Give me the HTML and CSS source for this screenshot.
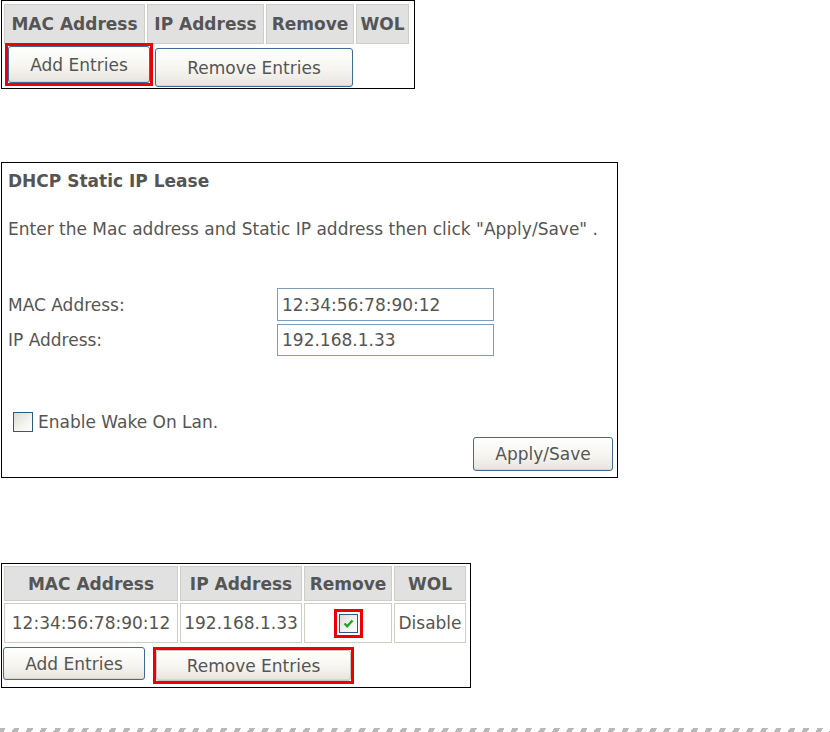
FILE: index.html
```html
<!DOCTYPE html>
<html lang="en">

<head>
    <meta charset="UTF-8">
    <meta name="viewport" content="width=device-width, initial-scale=1.0">
    <title>DHCP Static IP Lease</title>
    <link rel="stylesheet" href="styles.css">
</head>

<body>
    <div class="page">

        <!-- step 1: empty lease list -->
        <div class="panel panel-list-empty">
            <table class="lease-table lease-table-small">
                <tr>
                    <th class="col-mac">MAC Address</th>
                    <th class="col-ip">IP Address</th>
                    <th class="col-remove">Remove</th>
                    <th class="col-wol">WOL</th>
                </tr>
            </table>
            <div class="button-row">
                <span class="marker marker-add">
                    <button class="btn btn-add">Add Entries</button>
                </span>
                <button class="btn btn-remove">Remove Entries</button>
            </div>
        </div>

        <!-- step 2: add form -->
        <div class="panel panel-form">
            <div class="lease-title">DHCP Static IP Lease</div>
            <div class="lease-intro">Enter the Mac address and Static IP address then click "Apply/Save" .</div>

            <div class="lease-form">
                <label for="mac">MAC Address:</label>
                <input type="text" id="mac" class="field field-mac" value="12:34:56:78:90:12">
                <label for="ip">IP Address:</label>
                <input type="text" id="ip" class="field field-ip" value="192.168.1.33">
            </div>

            <div class="wol-row">
                <span class="checkbox"></span>
                <span class="wol-label">Enable Wake On Lan.</span>
            </div>

            <div class="apply-row">
                <button class="btn btn-apply">Apply/Save</button>
            </div>
        </div>

        <!-- step 3: list with one entry -->
        <div class="panel panel-list">
            <table class="lease-table lease-table-full">
                <tr>
                    <th class="col-mac">MAC Address</th>
                    <th class="col-ip">IP Address</th>
                    <th class="col-remove">Remove</th>
                    <th class="col-wol">WOL</th>
                </tr>
                <tr class="data-row">
                    <td>12:34:56:78:90:12</td>
                    <td>192.168.1.33</td>
                    <td>
                        <span class="marker marker-check">
                            <span class="checkbox checked">
                                <svg width="11" height="9" viewBox="0 0 11 9">
                                    <path d="M1.5 4.5 L4.2 7.2 L9.5 1.5" fill="none" stroke="#22a32a" stroke-width="2.4" />
                                </svg>
                            </span>
                        </span>
                    </td>
                    <td>Disable</td>
                </tr>
            </table>
            <div class="button-row">
                <button class="btn btn-add">Add Entries</button>
                <span class="marker marker-remove">
                    <button class="btn btn-remove pressed">Remove Entries</button>
                </span>
            </div>
        </div>

        <div class="divider"></div>
    </div>
</body>

</html>
```

FILE: styles.css
```css
* {
    box-sizing: border-box;
}

body {
    margin: 0;
    background-color: #fff;
    font-family: "DejaVu Sans", Verdana, sans-serif;
    font-size: 17px;
    color: #555;
}

.page {
    padding-left: 1px;
}

.panel {
    border: 1px solid #000;
}

/* panels */

.panel-list-empty {
    width: 414px;
    height: 89px;
    padding-top: 1px;
}

.panel-form {
    width: 617px;
    height: 316px;
    margin-top: 73px;
    padding: 0 4px 0 6px;
}

.panel-list {
    width: 470px;
    height: 125px;
    margin-top: 85px;
}

/* tables */

.lease-table {
    border-collapse: separate;
    border-spacing: 2px;
    border: 0;
}

.lease-table th,
.lease-table td {
    border: 1px solid #cfcec6;
    text-align: center;
    padding: 0;
    white-space: nowrap;
}

.lease-table th {
    background-color: #e1e1e1;
    font-weight: bold;
    color: #555;
}

.lease-table td {
    background-color: #fff;
}

.lease-table-small th {
    height: 40px;
}

.lease-table-small .col-mac { width: 141px; }
.lease-table-small .col-ip { width: 117px; }
.lease-table-small .col-remove { width: 88px; }
.lease-table-small .col-wol { width: 53px; }

.lease-table-full th {
    height: 35px;
}

.lease-table-full .data-row td {
    height: 40px;
}

.lease-table-full .col-mac { width: 174px; }
.lease-table-full .col-ip { width: 122px; }
.lease-table-full .col-remove { width: 88px; }
.lease-table-full .col-wol { width: 72px; }

/* buttons */

.button-row {
    display: flex;
    align-items: flex-start;
}

.btn {
    display: block;
    font-family: "DejaVu Sans", Verdana, sans-serif;
    font-size: 17px;
    color: #555;
    padding: 0;
    border: 1px solid #3f6b95;
    border-radius: 3px;
    background: linear-gradient(to bottom, #ffffff 0%, #f6f5f1 55%, #e6e4dc 100%);
    box-shadow: inset 0 -1px 0 #d8d5ca;
}

.pressed {
    border-color: #c4c4c0;
}

/* red highlight boxes */

.marker {
    display: inline-block;
    border: 3px solid #ee0000;
}

.marker-add {
    margin-left: 3px;
    margin-top: -3px;
}

.marker-remove {
    margin-left: 8px;
    margin-top: 2px;
}

.marker-check {
    padding: 2px;
    vertical-align: middle;
    line-height: 0;
}

.panel-list-empty .btn-add {
    width: 142px;
    height: 37px;
}

.panel-list-empty .btn-remove {
    width: 198px;
    height: 39px;
    margin-left: 2px;
    margin-top: 2px;
}

.panel-list .btn-add {
    width: 142px;
    height: 33px;
    margin-left: 1px;
    margin-top: 2px;
}

.panel-list .btn-remove {
    width: 195px;
    height: 31px;
}

/* form */

.lease-title {
    margin-top: 8px;
    line-height: 20px;
    font-weight: bold;
}

.lease-intro {
    margin-top: 28px;
    line-height: 20px;
}

.lease-form {
    display: grid;
    grid-template-columns: 269px 217px;
    row-gap: 3px;
    align-items: center;
    margin-top: 49px;
}

.field {
    font-family: "DejaVu Sans", Verdana, sans-serif;
    font-size: 17px;
    color: #555;
    width: 217px;
    border: 1px solid #7f9db9;
    padding: 0 4px;
    background: #fff;
}

.field-mac {
    height: 33px;
}

.field-ip {
    height: 32px;
}

.wol-row {
    display: flex;
    align-items: center;
    margin-top: 56px;
    margin-left: 5px;
    height: 20px;
}

.wol-label {
    margin-left: 5px;
    line-height: 20px;
}

.checkbox {
    display: inline-flex;
    align-items: center;
    justify-content: center;
    width: 20px;
    height: 20px;
    border: 1px solid #2c5a87;
    background: linear-gradient(135deg, #dcdcd6 0%, #f4f4f0 60%, #ffffff 100%);
    vertical-align: middle;
}

.checkbox.checked {
    width: 19px;
    height: 19px;
}

.apply-row {
    display: flex;
    justify-content: flex-end;
    margin-top: 5px;
}

.btn-apply {
    width: 140px;
    height: 34px;
}

/* hatched divider */

.divider {
    margin-top: 40px;
    margin-left: -1px;
    height: 4px;
    background: repeating-linear-gradient(120deg, #b8b8b8 0 5px, #fff 5px 12px);
}
```
